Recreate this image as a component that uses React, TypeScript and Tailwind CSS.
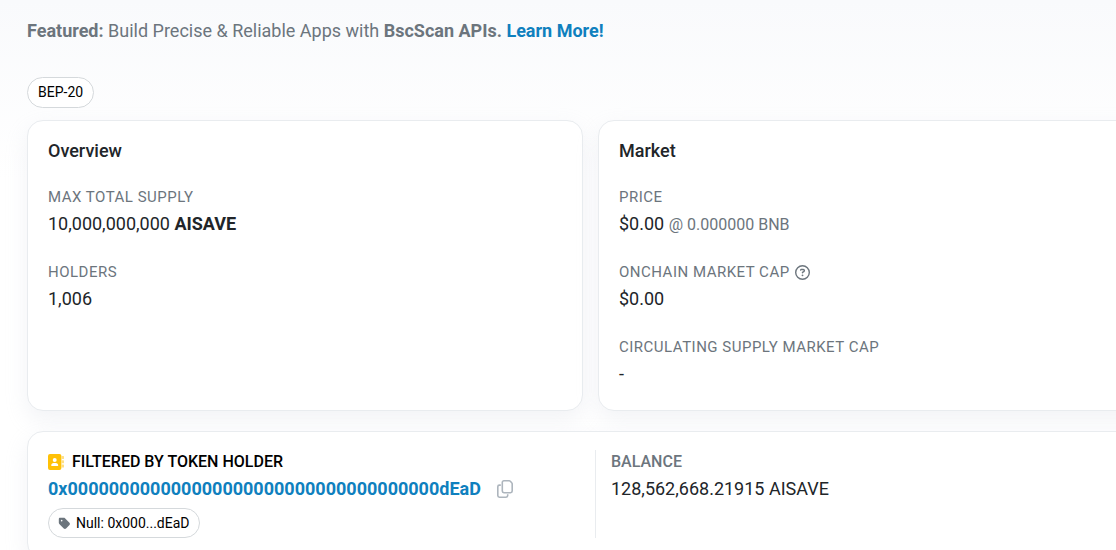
import type { ReactNode } from "react";
import { FaRegCircleQuestion, FaTag } from "react-icons/fa6";

function AddressBookIcon() {
  return (
    <svg viewBox="0 0 16 16" className="size-4" fill="#ffc107" aria-hidden="true">
      <g opacity="0.5">
        <rect x="13.800" y="2" width="2.200" height="3" rx="0.500" />
        <rect x="13.800" y="6.200" width="2.200" height="3" rx="0.500" />
        <rect x="13.800" y="10.400" width="2.200" height="3" rx="0.500" />
      </g>
      <path
        fillRule="evenodd"
        d="M2 0a2 2 0 0 0-2 2v12a2 2 0 0 0 2 2h9.400a2 2 0 0 0 2-2V2a2 2 0 0 0-2-2zM6.700 8a2 2 0 1 0 0-4 2 2 0 1 0 0 4zM5.700 9a2.500 2.500 0 0 0-2.500 2.500c0 .3.200.5.500.5h6c.3 0 .5-.2.5-.5A2.500 2.500 0 0 0 7.700 9z"
      />
    </svg>
  );
}

function CopyIcon() {
  return (
    <svg
      viewBox="0 0 16 18"
      className="h-[18px] w-4"
      fill="none"
      stroke="currentColor"
      strokeWidth="1.6"
      aria-hidden="true"
    >
      <path d="M6.900.8h5.300c.4 0 .8.2 1.100.5l1.400 1.500c.3.3.5.7.5 1.100v7.200c0 .9-.7 1.600-1.600 1.600H6.900c-.9 0-1.600-.7-1.600-1.600V2.400c0-.9.7-1.600 1.600-1.600z" />
      <path d="M3.800 5.100H2.400C1.500 5.100.8 5.800.8 6.700v8.900c0 .9.7 1.600 1.600 1.600h6.700c.9 0 1.600-.7 1.600-1.600v-1.300" />
    </svg>
  );
}

function Card({ title, children }: { title: string; children: ReactNode }) {
  return (
    <section className="rounded-2xl border border-[#e9ecef] bg-white px-5 pt-4 pb-[22px] shadow-[0_9px_22px_rgba(189,197,209,0.2)]">
      <h2 className="text-lg leading-7 font-medium text-[#212529]">{title}</h2>
      <dl className="mt-5 flex flex-col gap-[22px]">{children}</dl>
    </section>
  );
}

function Stat({ label, children }: { label: ReactNode; children: ReactNode }) {
  return (
    <div>
      <dt className="flex items-center gap-[5px] text-[15px] leading-6 tracking-[0.5px] text-[#6c757d] uppercase">
        {label}
      </dt>
      <dd className="mt-px text-lg leading-7">{children}</dd>
    </div>
  );
}

export default function App() {
  return (
    <main className="min-h-screen overflow-hidden bg-linear-to-b from-[#f9fafc] to-white to-[180px] pt-[17px] pl-[27px] font-[Roboto,sans-serif] text-lg text-[#212529]">
      <p className="leading-7 text-[#6c757d]">
        <b className="font-bold">Featured:</b> Build Precise &amp; Reliable Apps with{" "}
        <b className="font-bold">BscScan APIs.</b>{" "}
        <a href="#apis" className="font-bold text-[#0f80be]">
          Learn More!
        </a>
      </p>

      <div className="mt-8 flex">
        <span className="rounded-full border border-[#d5d9dc] bg-white px-[10px] py-1 text-sm leading-[21px] font-normal text-black">
          BEP-20
        </span>
      </div>

      <div className="-mr-[38px] mt-3 flex flex-col gap-5">
        <div className="grid grid-cols-2 gap-[15px]">
          <Card title="Overview">
            <Stat label="Max Total Supply">
              10,000,000,000 <b className="font-bold">AISAVE</b>
            </Stat>
            <Stat label="Holders">1,006</Stat>
          </Card>
          <Card title="Market">
            <Stat label="Price">
              $0.00 <span className="text-base text-[#6c757d]">@ 0.000000 BNB</span>
            </Stat>
            <Stat
              label={
                <>
                  Onchain Market Cap
                  <FaRegCircleQuestion className="size-[15px]" />
                </>
              }
            >
              $0.00
            </Stat>
            <Stat label="Circulating Supply Market Cap">-</Stat>
          </Card>
        </div>

        <section className="grid grid-cols-2 rounded-2xl border border-[#e9ecef] bg-white pt-[18px] pr-[11px] pb-5 pl-5 shadow-[0_9px_22px_rgba(189,197,209,0.2)]">
          <div>
            <h2 className="flex items-center gap-2 text-base leading-6 font-medium text-black uppercase">
              <AddressBookIcon />
              Filtered by Token Holder
            </h2>
            <div className="mt-px flex items-center gap-4">
              <a href="#holder" className="leading-7 font-bold text-[#0f80be]">
                0x000000000000000000000000000000000000dEaD
              </a>
              <button type="button" aria-label="Copy address" className="text-[#adb5bd]">
                <CopyIcon />
              </button>
            </div>
            <div className="mt-[5px] flex">
              <span className="flex items-center gap-[5px] rounded-full border border-[#d5d9dc] bg-white px-[9px] py-[3px] text-sm leading-[22px] font-normal text-black">
                <FaTag className="size-[13px] text-[#6c757d]" />
                Null: 0x000...dEaD
              </span>
            </div>
          </div>
          <div className="border-l border-[#e9ecef] pl-[15px]">
            <h2 className="text-base leading-6 font-medium text-[#6c757d] uppercase">Balance</h2>
            <p className="mt-px leading-7">128,562,668.21915 AISAVE</p>
          </div>
        </section>
      </div>
    </main>
  );
}
